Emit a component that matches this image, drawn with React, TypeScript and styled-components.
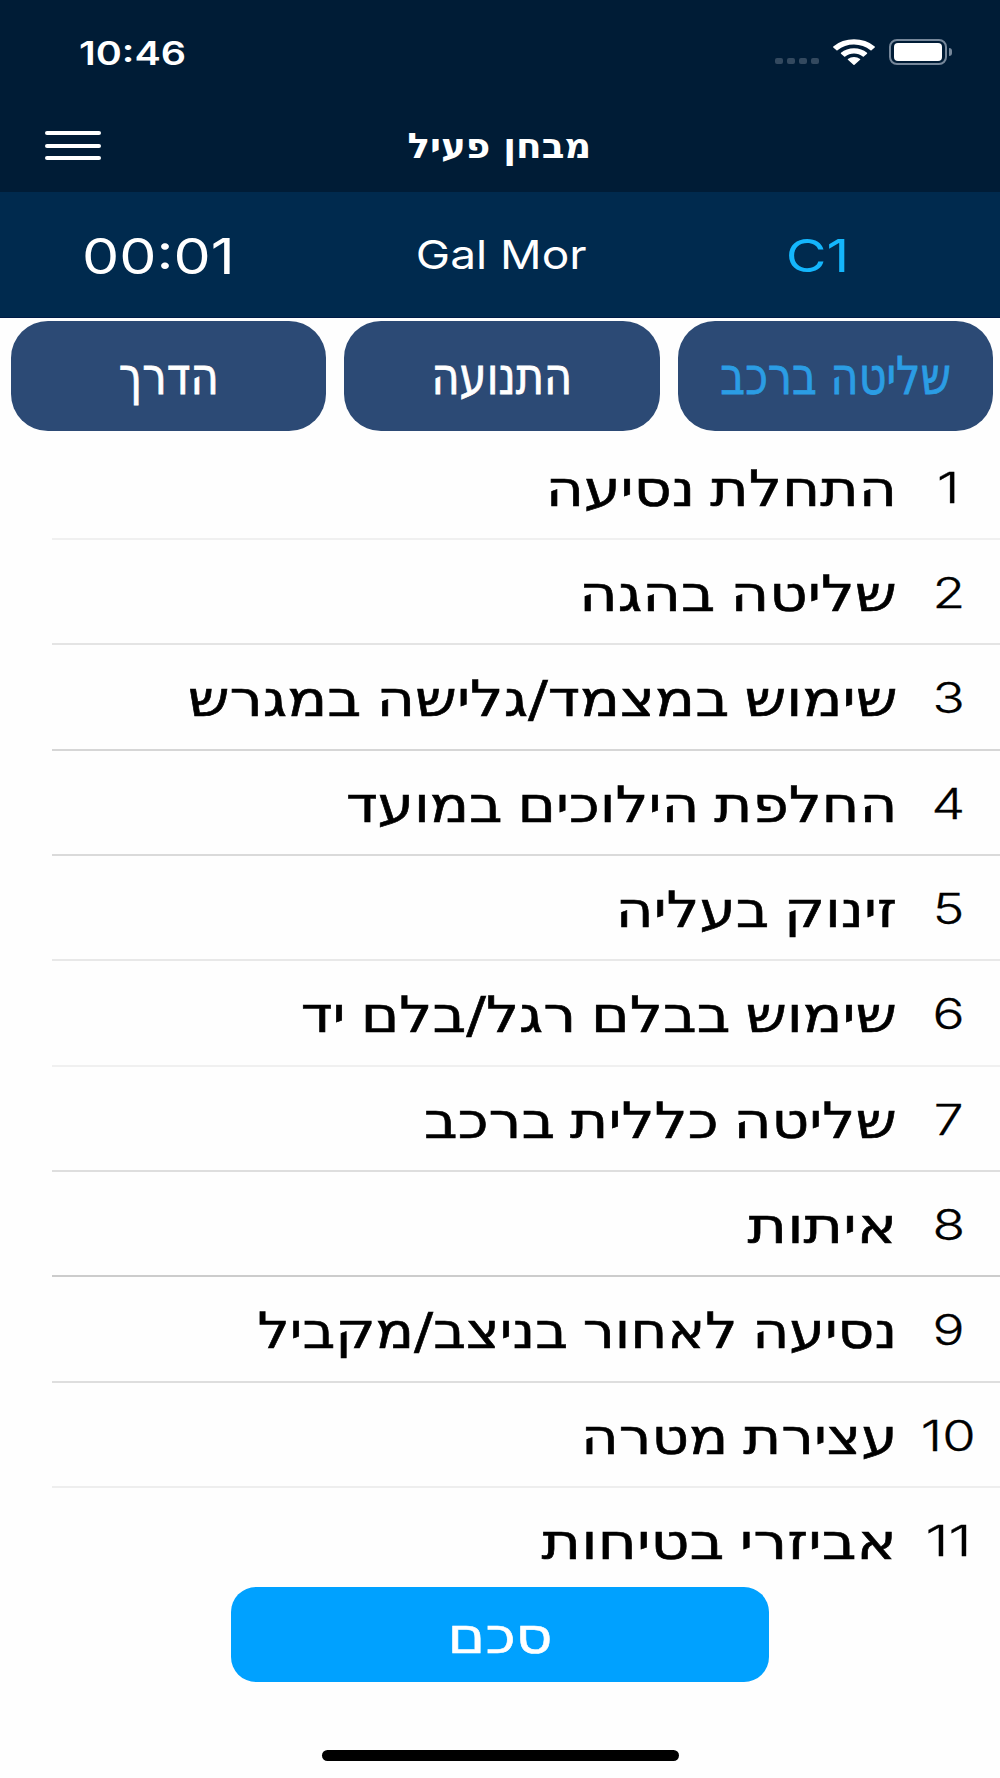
import React from 'react';
import styled, { createGlobalStyle } from 'styled-components';

const hebrew = '"DejaVu Sans", "Liberation Sans", sans-serif';
const latin = 'Inter, "Liberation Sans", sans-serif';

const GlobalStyle = createGlobalStyle`
  *, *::before, *::after { box-sizing: border-box; }
  body { margin: 0; background: #fefefe; }
  button { border: 0; padding: 0; margin: 0; }
`;

const Screen = styled.div`
  width: 1000px;
  height: 1778px;
  display: flex;
  flex-direction: column;
  overflow: hidden;
  background: #fefefe;
`;

const Header = styled.header`
  flex: none;
  height: 192px;
  background: #001c36;
  color: #fff;
`;

const StatusBar = styled.div`
  height: 99px;
  padding: 5px 48px 0 79px;
  display: flex;
  align-items: center;
  justify-content: space-between;
`;

type StretchProps = { $size: number; $stretch: number; $origin?: string };

/* Wide lettering: glyphs are widened horizontally from the given origin. */
const Wide = styled.span<StretchProps>`
  display: inline-block;
  white-space: nowrap;
  line-height: 1;
  font-size: ${p => p.$size}px;
  transform: scaleX(${p => p.$stretch});
  transform-origin: ${p => p.$origin ?? 'center'} center;
`;

const Clock = styled(Wide)`
  font-family: ${latin};
  font-weight: 600;
  margin-top: 3px;
`;

const StatusIcons = styled.div`
  display: flex;
  align-items: center;
`;

const SignalDots = styled.div`
  display: flex;
  gap: 4px;
  margin: 18px 14px 0 0;
`;

const Dot = styled.i`
  width: 8px;
  height: 6px;
  border-radius: 2px;
  background: #33495f;
`;

const WifiIcon = styled.svg`
  width: 42px;
  height: 26px;
  margin-right: 14px;
`;

const Battery = styled.div`
  width: 58px;
  height: 26px;
  padding: 2px 3px;
  border: 2px solid #76879a;
  border-radius: 8px;
`;

const Charge = styled.div`
  height: 100%;
  border-radius: 4px;
  background: #fff;
`;

const BatteryNub = styled.div`
  width: 3px;
  height: 8px;
  margin-left: 2px;
  border-radius: 0 3px 3px 0;
  background: #76879a;
`;

const TitleBar = styled.div`
  height: 93px;
  padding: 0 45px;
  display: grid;
  grid-template-columns: 57px 1fr 58px;
  align-items: center;
`;

const MenuButton = styled.button`
  width: 56px;
  display: flex;
  flex-direction: column;
  gap: 8.5px;
  background: none;
`;

const MenuLine = styled.span`
  height: 4px;
  border-radius: 2px;
  background: #fff;
`;

const Title = styled.h1`
  margin: 0;
  padding-top: 1px;
  font: 700 35px/1 ${hebrew};
  text-align: center;
`;

const InfoBar = styled.section`
  flex: none;
  height: 125.5px;
  display: grid;
  grid-template-columns: 317px 368px 315px;
  background: #002a4e;
  border-bottom: 1px solid #001b46;
  color: #fff;
  font-family: ${latin};
`;

const InfoCell = styled.div<{ $shift?: number; $drop?: number; $color?: string }>`
  display: flex;
  align-items: center;
  justify-content: center;
  padding-right: ${p => p.$shift ?? 0}px;
  padding-top: ${p => p.$drop ?? 0}px;
  color: ${p => p.$color ?? '#fff'};
`;

const Tabs = styled.nav`
  flex: none;
  height: 117px;
  padding: 3.5px 7px 3.5px 11px;
  display: grid;
  grid-template-columns: repeat(3, 1fr);
  column-gap: 18px;
`;

const Tab = styled.button<{ $active?: boolean }>`
  border-radius: 37px;
  background: #2c4a75;
  color: ${p => (p.$active ? '#2b9de4' : '#fff')};
  font-family: ${hebrew};
  -webkit-text-stroke: 0.8px currentColor;
`;

const List = styled.ol`
  flex: none;
  height: 1152px;
  margin: 0;
  padding: 0;
  overflow: hidden;
  list-style: none;
  direction: rtl;
`;

const Row = styled.li<{ $line: string }>`
  height: 105.35px;
  margin-left: 52px;
  padding-top: 3px;
  display: grid;
  grid-template-columns: 103px 1fr;
  align-items: center;
  border-bottom: 2px solid ${p => p.$line};
  color: #000;
`;

const Num = styled.div`
  text-align: center;
  font-family: ${latin};
  font-weight: 300;
  -webkit-text-stroke: 0.3px #000;
`;

const Label = styled.div`
  padding-top: 2px;
  font-family: ${hebrew};
  text-align: right;
  word-spacing: -3px;
  -webkit-text-stroke: 0.6px #000;
`;

const Footer = styled.footer`
  flex: 1;
  display: flex;
  flex-direction: column;
  align-items: center;
  justify-content: space-between;
  padding-bottom: 17px;
`;

const SummaryButton = styled.button`
  width: 538px;
  height: 95px;
  padding-top: 4px;
  border-radius: 25px;
  background: #00a1ff;
  color: #fff;
  font-family: ${hebrew};
  -webkit-text-stroke: 0.6px #fff;
`;

const HomeIndicator = styled.div`
  width: 357px;
  height: 11px;
  border-radius: 6px;
  background: #000;
`;

const tabs = [
  { text: 'הדרך', stretch: 0.835 },
  { text: 'התנועה', stretch: 0.83 },
  { text: 'שליטה ברכב', stretch: 0.826, active: true },
];

const items = [
  { text: 'התחלת נסיעה', stretch: 1.171, numStretch: 1.39, line: '#f0f0f0' },
  { text: 'שליטה בהגה', stretch: 1.187, numStretch: 1.27, line: '#e4e4e4' },
  { text: 'שימוש במצמד/גלישה במגרש', stretch: 1.18, numStretch: 1.27, line: '#d6d6d6' },
  { text: 'החלפת הילוכים במועד', stretch: 1.16, numStretch: 1.27, line: '#dadada' },
  { text: 'זינוק בעליה', stretch: 1.157, numStretch: 1.27, line: '#e8e8e8' },
  { text: 'שימוש בבלם רגל/בלם יד', stretch: 1.167, numStretch: 1.27, line: '#f0f0f0' },
  { text: 'שליטה כללית ברכב', stretch: 1.165, numStretch: 1.27, line: '#dedede' },
  { text: 'איתות', stretch: 1.205, numStretch: 1.27, line: '#cccccc' },
  { text: 'נסיעה לאחור בניצב/מקביל', stretch: 1.136, numStretch: 1.27, line: '#dedede' },
  { text: 'עצירת מטרה', stretch: 1.157, numStretch: 1.29, line: '#eeeeee' },
  { text: 'אביזרי בטיחות', stretch: 1.205, numStretch: 1.4, line: '#e4e4e4' },
];

export default function App() {
  return (
    <Screen>
      <GlobalStyle />
      <Header>
        <StatusBar>
          <Clock $size={32} $stretch={1.235} $origin="left">10:46</Clock>
          <StatusIcons>
            <SignalDots><Dot /><Dot /><Dot /><Dot /></SignalDots>
            <WifiIcon viewBox="0.6 0.1 15.8 11.1" preserveAspectRatio="none" fill="#fff">
              <path d="M8.5 2.4c2.3 0 4.5.9 6.2 2.5.1.1.3.1.4 0l1.2-1.2c.1-.1.1-.3 0-.4a11.3 11.3 0 0 0-15.6 0c-.1.1-.1.3 0 .4l1.2 1.2c.1.1.3.1.4 0a9 9 0 0 1 6.2-2.5z" />
              <path d="M8.5 6.3c1.2 0 2.4.5 3.3 1.3.1.1.3.1.4 0l1.2-1.2c.1-.1.1-.3 0-.4a7.1 7.1 0 0 0-9.8 0c-.1.1-.1.3 0 .4l1.2 1.2c.1.1.3.1.4 0 .9-.8 2.1-1.3 3.3-1.3z" />
              <path d="M10.8 9c.1-.1.1-.3 0-.4a3.6 3.6 0 0 0-4.6 0c-.1.1-.1.3 0 .4l2.1 2.1c.1.1.3.1.4 0z" />
            </WifiIcon>
            <Battery><Charge /></Battery>
            <BatteryNub />
          </StatusIcons>
        </StatusBar>
        <TitleBar>
          <MenuButton aria-label="תפריט"><MenuLine /><MenuLine /><MenuLine /></MenuButton>
          <Title dir="rtl"><Wide $size={35} $stretch={1.065}>מבחן פעיל</Wide></Title>
        </TitleBar>
      </Header>

      <InfoBar>
        <InfoCell $drop={4}><Wide $size={49} $stretch={1.205}>00:01</Wide></InfoCell>
        <InfoCell $drop={2}><Wide $size={40} $stretch={1.15}>Gal Mor</Wide></InfoCell>
        <InfoCell $drop={3} $shift={49} $color="#14b6fc"><Wide $size={45} $stretch={1.24}>C1</Wide></InfoCell>
      </InfoBar>

      <Tabs>
        {tabs.map(t => (
          <Tab key={t.text} $active={t.active}>
            <Wide $size={52} $stretch={t.stretch}>{t.text}</Wide>
          </Tab>
        ))}
      </Tabs>

      <List>
        {items.map((item, i) => (
          <Row key={item.text} $line={item.line}>
            <Num><Wide $size={42} $stretch={item.numStretch}>{i + 1}</Wide></Num>
            <Label><Wide $size={50} $stretch={item.stretch} $origin="right">{item.text}</Wide></Label>
          </Row>
        ))}
      </List>

      <Footer>
        <SummaryButton><Wide $size={50} $stretch={1.14}>סכם</Wide></SummaryButton>
        <HomeIndicator />
      </Footer>
    </Screen>
  );
}
